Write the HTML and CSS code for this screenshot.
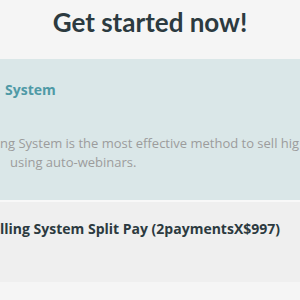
FILE: index.html
```html
<!DOCTYPE html>
<html lang="en">
  <head>
    <meta charset="utf-8" />
    <title>Get started now!</title>
    <link rel="stylesheet" href="styles.css">
  </head>
  <body>
    <!-- Pricing header -->
    <header class="pricing-header">
      <h1>Get started now!</h1>
    </header>

    <!-- Selected plan -->
    <section class="plan plan-active">
      <h2 class="plan-title">System</h2>
      <p class="plan-text">
        <span class="line">ng System is the most effective method to sell hig</span>
        <span class="line line-indent">using auto-webinars.</span>
      </p>
    </section>

    <!-- Split pay option -->
    <section class="plan plan-split">
      <h2 class="plan-name">lling System Split Pay (2paymentsX$997)</h2>
    </section>
  </body>
</html>
```

FILE: styles.css
```css
/* Base */
* {
  margin: 0;
  padding: 0;
  box-sizing: border-box;
}

body {
  font-family: 'Open Sans', 'Lato', sans-serif;
  background-color: #f5f5f5;
  color: #2c3a40;
  overflow: hidden;
  width: 300px;
  height: 300px;
}

/* Header */
.pricing-header {
  height: 59px;
  padding-top: 7px;
  text-align: center;
}

.pricing-header h1 {
  font-family: 'Lato', sans-serif;
  font-size: 26px;
  font-weight: 700;
  line-height: 30px;
  color: #2c3a40;
}

/* Plans */
.plan {
  white-space: nowrap;
  overflow: hidden;
}

.plan-active {
  height: 143px;
  padding: 21px 0 0 5px;
  background-color: #dae7e8;
  border-bottom: 2px solid #f8f8f8;
}

.plan-title {
  font-size: 14px;
  font-weight: 700;
  line-height: 20px;
  color: #4f9aa6;
}

.plan-text {
  margin-top: 34px;
  margin-left: -5px;
  font-size: 13px;
  line-height: 19px;
  color: #9c9c9c;
}

.plan-text .line {
  display: block;
}

.plan-text .line-indent {
  padding-left: 10px;
}

.plan-split {
  height: 80px;
  padding-top: 17px;
  background-color: #efefef;
}

.plan-name {
  font-size: 14px;
  font-weight: 700;
  line-height: 20px;
  color: #2c3a40;
}
```
